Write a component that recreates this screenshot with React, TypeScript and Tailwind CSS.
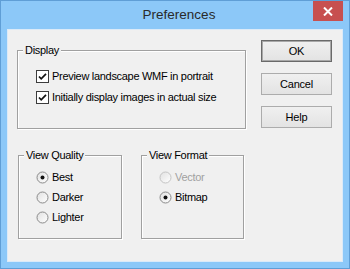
import React from 'react'

const font = { fontFamily: '"Liberation Sans", Arial, sans-serif' }

function CheckBox() {
  return (
    <svg width="13" height="13" viewBox="0 0 13 13" className="shrink-0">
      <rect x="0.5" y="0.5" width="12" height="12" fill="#fff" stroke="#3c3c3c" />
      <path d="M3 6.5 L5.2 8.8 L10 3.8" fill="none" stroke="#111" strokeWidth="1.7" />
    </svg>
  )
}

function Radio({ checked, disabled }: { checked?: boolean; disabled?: boolean }) {
  return (
    <svg width="13" height="13" viewBox="0 0 13 13" className="shrink-0">
      <defs>
        <linearGradient id="rg" x1="0" y1="0" x2="1" y2="1">
          <stop offset="0" stopColor="#e0e0e0" />
          <stop offset="1" stopColor="#ffffff" />
        </linearGradient>
      </defs>
      <circle cx="6.5" cy="6.5" r="5.5" fill="url(#rg)" stroke={disabled ? '#c4c4c4' : '#8a8a8a'} />
      {checked && <circle cx="6.5" cy="6.5" r="2" fill="#111" />}
    </svg>
  )
}

function Group({ title, className, children }: { title: string; className: string; children: React.ReactNode }) {
  return (
    <fieldset className={`border border-[#a0a0a0] pl-[5px] shadow-[1px_1px_0_#fff,inset_1px_1px_0_#fff] ${className}`}>
      <legend className="px-[2px] bg-[#f0f0f0] text-[11px] leading-[14px] tracking-[-0.3px] text-black">{title}</legend>
      {children}
    </fieldset>
  )
}

function Button({ label, isDefault }: { label: string; isDefault?: boolean }) {
  return (
    <div
      className={`w-[71px] h-[22px] flex items-center justify-center text-[11px] tracking-[-0.2px] text-black bg-gradient-to-b from-[#f0f0f0] to-[#e3e3e3] ${
        isDefault ? 'border border-[#6a6a6a] shadow-[inset_0_0_0_1px_#a8a8a8]' : 'border border-[#acacac]'
      }`}
    >
      {label}
    </div>
  )
}

export default function App() {
  return (
    <div style={font} className="w-[350px] h-[269px] border border-[#5f9ed6] bg-[#8cc8f8] flex flex-col">
      {/* Title bar */}
      <div className="h-[28px] flex items-start relative">
        <div className="flex-1 text-center text-[13.5px] leading-[28px] text-[#2a2a2a] pl-[8px]">Preferences</div>
        <div className="absolute right-[6px] top-0 w-[30px] h-[20px] bg-[#c75050] flex items-center justify-center">
          <svg width="10" height="9" viewBox="0 0 10 9">
            <path d="M1 0.5 L9 8.5 M9 0.5 L1 8.5" stroke="#fff" strokeWidth="2" />
          </svg>
        </div>
      </div>

      {/* Client area */}
      <div className="mx-[6px] h-[233px] border border-[#dbeaf8] bg-[#f0f0f0] flex">
        {/* Left column */}
        <div className="w-[238px] pt-[13px] pl-[9px] flex flex-col">
          <Group title="Display" className="w-[229px] h-[86px]">
            <div className="flex flex-col gap-[7px] pl-[13px] pt-[12px] text-[11px] leading-[14px] tracking-[-0.3px] text-black">
              <div className="flex items-center gap-[3px]">
                <CheckBox />
                <span>Preview landscape WMF in portrait</span>
              </div>
              <div className="flex items-center gap-[3px]">
                <CheckBox />
                <span>Initially display images in actual size</span>
              </div>
            </div>
          </Group>

          <div className="flex mt-[19px] ml-[1px] gap-[19px]">
            <Group title="View Quality" className="w-[104px] h-[91px]">
              <div className="flex flex-col gap-[6px] pl-[12px] pt-[8px] text-[11px] leading-[14px] tracking-[-0.3px] text-black">
                <div className="flex items-center gap-[3px]">
                  <Radio checked />
                  <span>Best</span>
                </div>
                <div className="flex items-center gap-[3px]">
                  <Radio />
                  <span>Darker</span>
                </div>
                <div className="flex items-center gap-[3px]">
                  <Radio />
                  <span>Lighter</span>
                </div>
              </div>
            </Group>
            <Group title="View Format" className="w-[103px] h-[91px]">
              <div className="flex flex-col gap-[6px] pl-[12px] pt-[8px] text-[11px] leading-[14px] tracking-[-0.3px] text-black">
                <div className="flex items-center gap-[3px]">
                  <Radio disabled />
                  <span className="text-[#a0a0a0]">Vector</span>
                </div>
                <div className="flex items-center gap-[3px]">
                  <Radio checked />
                  <span>Bitmap</span>
                </div>
              </div>
            </Group>
          </div>
        </div>

        {/* Buttons */}
        <div className="ml-[15px] pt-[10px] flex flex-col gap-[11px]">
          <Button label="OK" isDefault />
          <Button label="Cancel" />
          <Button label="Help" />
        </div>
      </div>
    </div>
  )
}
